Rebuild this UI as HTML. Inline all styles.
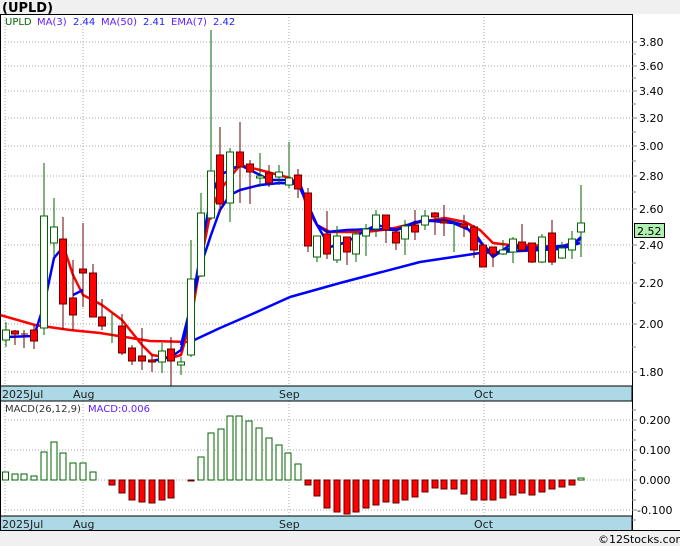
<!DOCTYPE html>
<html><head><meta charset="utf-8"><style>
body{margin:0;background:#f0f0f0;width:680px;height:546px;overflow:hidden;font-family:"Liberation Sans",sans-serif}
svg{display:block}
text{font-family:"DejaVu Sans","Liberation Sans",sans-serif}
</style></head><body>
<svg width="680" height="546" xmlns="http://www.w3.org/2000/svg">
<rect x="0" y="0" width="680" height="546" fill="#f0f0f0"/>
<text x="2" y="12" font-size="13" font-weight="bold" font-family="Liberation Sans,sans-serif" fill="#000">(UPLD)</text>
<rect x="0" y="14" width="680" height="516" fill="#fff"/>
<!-- main grid -->
<g stroke="#aaa" stroke-dasharray="1,2" stroke-width="1">
<line x1="5" y1="42" x2="632" y2="42"/><line x1="5" y1="66" x2="632" y2="66"/><line x1="5" y1="91" x2="632" y2="91"/><line x1="5" y1="118" x2="632" y2="118"/><line x1="5" y1="146" x2="632" y2="146"/><line x1="5" y1="176" x2="632" y2="176"/><line x1="5" y1="209" x2="632" y2="209"/><line x1="5" y1="245" x2="632" y2="245"/><line x1="5" y1="283" x2="632" y2="283"/><line x1="5" y1="324" x2="632" y2="324"/><line x1="5" y1="372" x2="632" y2="372"/>
<line x1="5" y1="14" x2="5" y2="386"/><line x1="83" y1="14" x2="83" y2="386"/><line x1="289" y1="14" x2="289" y2="386"/><line x1="484" y1="14" x2="484" y2="386"/>
<line x1="5" y1="420" x2="632" y2="420"/><line x1="5" y1="450" x2="632" y2="450"/><line x1="5" y1="480" x2="632" y2="480"/><line x1="5" y1="510" x2="632" y2="510"/>
<line x1="5" y1="401" x2="5" y2="516"/><line x1="83" y1="401" x2="83" y2="516"/><line x1="289" y1="401" x2="289" y2="516"/><line x1="484" y1="401" x2="484" y2="516"/>
</g>
<text x="5" y="25" font-size="10" fill="#006400">UPLD</text>
<text x="37" y="25" font-size="10" fill="#6020ff">MA(3)</text><text x="73" y="25" font-size="10" fill="#2020ff">2.44</text>
<text x="101" y="25" font-size="10" fill="#6020ff">MA(50)</text><text x="143" y="25" font-size="10" fill="#2020ff">2.41</text>
<text x="171" y="25" font-size="10" fill="#6020ff">EMA(7)</text><text x="213" y="25" font-size="10" fill="#2020ff">2.42</text>
<!-- lines -->
<g fill="none" stroke-width="2.5" stroke-linejoin="round">
<polyline stroke="#f00" points="0,315 35,325 70,330 100,333 150,341 190,342"/>
<polyline stroke="#00f" points="190,342 220,328 250,315 290,297 340,283 420,262 480,253 560,249 580,243"/>
<polyline stroke="#f00" points="63,245 73,275 83,295 102,305 122,320 142,345 152,355 171,358 181,355 191,320 201,260 211,210 220,190 240,165 260,170 290,178 300,185 308,210 317,225 330,232 350,232 366,232 390,229 420,222 445,218 465,222 480,230 493,243 510,245 530,245 560,247 580,240"/>
<polyline stroke="#00f" points="6,337 34,336 44,305 54,258 63,247"/>
<polyline stroke="#00f" points="73,295 83,290"/>
<polyline stroke="#00f" points="152,361 171,357 181,350 191,310 201,250 211,196 220,175 240,165 250,170 270,180 290,180 300,184 308,205 317,225 330,247 347,242 366,230 377,225 397,230 423,220 453,223 474,232 483,245 493,257 510,245 533,248 560,246 572,245 581,237"/>
<polyline stroke="#00f" points="181,345 191,305 201,265 211,235 220,210 230,195 240,190 260,185 280,183 298,184 308,205 317,225 327,232 347,230 376,229 396,230 415,222 444,220 464,225 483,245 493,254 513,248 552,249 572,246 581,238"/>
</g>
<!-- candles -->
<g stroke-width="1">
<g stroke="#006400" fill="#fff">
<line x1="6" y1="322" x2="6" y2="347"/><rect x="2.5" y="330" width="7" height="10"/>
<line x1="44" y1="163" x2="44" y2="335"/><rect x="40.5" y="216" width="7" height="112"/>
<line x1="54" y1="198" x2="54" y2="257"/><rect x="50.5" y="227" width="7" height="16"/>
<line x1="112" y1="313" x2="112" y2="343"/>
<line x1="162" y1="343" x2="162" y2="373"/><rect x="158.5" y="351" width="7" height="11"/>
<line x1="181" y1="357" x2="181" y2="375"/><rect x="177.5" y="362" width="7" height="3"/>
<line x1="191" y1="240" x2="191" y2="357"/><rect x="187.5" y="279" width="7" height="76"/>
<line x1="201" y1="193" x2="201" y2="277"/><rect x="197.5" y="213" width="7" height="63"/>
<line x1="211" y1="30" x2="211" y2="220"/><rect x="207.5" y="171" width="7" height="47"/>
<line x1="230" y1="148" x2="230" y2="222"/><rect x="226.5" y="152" width="7" height="51"/>
<line x1="260" y1="153" x2="260" y2="187"/><rect x="256.5" y="176" width="7" height="2"/>
<line x1="279" y1="165" x2="279" y2="185"/><rect x="275.5" y="172" width="7" height="5"/>
<line x1="289" y1="142" x2="289" y2="188"/><rect x="285.5" y="178" width="7" height="7"/>
<line x1="317" y1="236" x2="317" y2="262"/><rect x="313.5" y="236" width="7" height="21"/>
<line x1="337" y1="226" x2="337" y2="263"/><rect x="333.5" y="236" width="7" height="24"/>
<line x1="356" y1="229" x2="356" y2="262"/><rect x="352.5" y="234" width="7" height="20"/>
<line x1="366" y1="224" x2="366" y2="256"/><rect x="362.5" y="229" width="7" height="7"/>
<line x1="376" y1="210" x2="376" y2="237"/><rect x="372.5" y="215" width="7" height="14"/>
<line x1="405" y1="220" x2="405" y2="255"/><rect x="401.5" y="226" width="7" height="13"/>
<line x1="425" y1="210" x2="425" y2="230"/><rect x="421.5" y="216" width="7" height="9"/>
<line x1="454" y1="220" x2="454" y2="252"/>
<line x1="503" y1="240" x2="503" y2="255"/><rect x="499.5" y="250" width="7" height="4"/>
<line x1="513" y1="237" x2="513" y2="263"/><rect x="509.5" y="239" width="7" height="13"/>
<line x1="542" y1="234" x2="542" y2="263"/><rect x="538.5" y="237" width="7" height="25"/>
<line x1="562" y1="242" x2="562" y2="259"/><rect x="558.5" y="248" width="7" height="10"/>
<line x1="572" y1="231" x2="572" y2="259"/><rect x="568.5" y="239" width="7" height="11"/>
<line x1="581" y1="185" x2="581" y2="257"/><rect x="577.5" y="223" width="7" height="9"/>
</g>
<g stroke="#600" fill="#f00">
<line x1="15" y1="330" x2="15" y2="345"/><rect x="11.5" y="331" width="7" height="3"/>
<line x1="24" y1="330" x2="24" y2="348"/><line x1="21" y1="334" x2="28" y2="334"/>
<line x1="34" y1="325" x2="34" y2="349"/><rect x="30.5" y="330" width="7" height="11"/>
<line x1="63" y1="217" x2="63" y2="330"/><rect x="59.5" y="239" width="7" height="65"/>
<line x1="73" y1="260" x2="73" y2="330"/><rect x="69.5" y="298" width="7" height="17"/>
<line x1="83" y1="223" x2="83" y2="307"/><rect x="79.5" y="269" width="7" height="4"/>
<line x1="93" y1="264" x2="93" y2="317"/><rect x="89.5" y="273" width="7" height="44"/>
<line x1="102" y1="299" x2="102" y2="330"/><rect x="98.5" y="317" width="7" height="9"/>
<line x1="122" y1="314" x2="122" y2="355"/><rect x="118.5" y="326" width="7" height="27"/>
<line x1="132" y1="345" x2="132" y2="365"/><rect x="128.5" y="348" width="7" height="13"/>
<line x1="142" y1="328" x2="142" y2="370"/><rect x="138.5" y="356" width="7" height="5"/>
<line x1="152" y1="355" x2="152" y2="372"/><rect x="148.5" y="360" width="7" height="2"/>
<line x1="171" y1="337" x2="171" y2="386"/><rect x="167.5" y="349" width="7" height="12"/>
<line x1="220" y1="127" x2="220" y2="213"/><rect x="216.5" y="155" width="7" height="49"/>
<line x1="240" y1="122" x2="240" y2="203"/><rect x="236.5" y="152" width="7" height="15"/>
<line x1="250" y1="160" x2="250" y2="204"/><rect x="246.5" y="164" width="7" height="8"/>
<line x1="269" y1="165" x2="269" y2="187"/><rect x="265.5" y="173" width="7" height="10"/>
<line x1="298" y1="169" x2="298" y2="198"/><rect x="294.5" y="175" width="7" height="14"/>
<line x1="308" y1="188" x2="308" y2="252"/><rect x="304.5" y="193" width="7" height="53"/>
<line x1="327" y1="211" x2="327" y2="259"/><rect x="323.5" y="234" width="7" height="20"/>
<line x1="347" y1="237" x2="347" y2="265"/><rect x="343.5" y="237" width="7" height="15"/>
<line x1="386" y1="215" x2="386" y2="243"/><rect x="382.5" y="215" width="7" height="15"/>
<line x1="396" y1="228" x2="396" y2="250"/><rect x="392.5" y="232" width="7" height="11"/>
<line x1="415" y1="210" x2="415" y2="240"/><rect x="411.5" y="225" width="7" height="7"/>
<line x1="435" y1="212" x2="435" y2="235"/><rect x="431.5" y="213" width="7" height="4"/>
<line x1="444" y1="205" x2="444" y2="236"/><rect x="440.5" y="221" width="7" height="2"/>
<line x1="464" y1="215" x2="464" y2="237"/><rect x="460.5" y="224" width="7" height="3"/>
<line x1="474" y1="225" x2="474" y2="258"/><rect x="470.5" y="227" width="7" height="23"/>
<line x1="483" y1="243" x2="483" y2="267"/><rect x="479.5" y="245" width="7" height="22"/>
<line x1="493" y1="247" x2="493" y2="267"/><rect x="489.5" y="247" width="7" height="7"/>
<line x1="522" y1="224" x2="522" y2="252"/><rect x="518.5" y="242" width="7" height="8"/>
<line x1="532" y1="243" x2="532" y2="263"/><rect x="528.5" y="243" width="7" height="19"/>
<line x1="552" y1="220" x2="552" y2="265"/><rect x="548.5" y="233" width="7" height="29"/>
</g>
</g>
<!-- MACD bars -->
<g stroke="#006400" fill="#fff">
<rect x="2.5" y="472" width="6" height="8"/><rect x="12" y="474" width="6" height="6"/><rect x="21" y="474" width="6" height="6"/><rect x="31" y="476" width="6" height="4"/>
<rect x="41" y="452" width="6" height="28"/><rect x="51" y="442" width="6" height="38"/><rect x="60" y="453" width="6" height="27"/><rect x="70" y="463" width="6" height="17"/><rect x="80" y="463" width="6" height="17"/><rect x="90" y="472" width="6" height="8"/>
<rect x="198" y="457" width="6" height="23"/><rect x="208" y="433" width="6" height="47"/><rect x="218" y="429" width="6" height="51"/><rect x="227" y="416" width="6" height="64"/><rect x="236" y="416" width="6" height="64"/><rect x="246" y="421" width="6" height="59"/><rect x="256" y="428" width="6" height="52"/><rect x="266" y="438" width="6" height="42"/><rect x="276" y="445" width="6" height="35"/><rect x="285" y="453" width="6" height="27"/><rect x="295" y="464" width="6" height="16"/>
<rect x="578" y="478" width="6" height="2"/>
</g>
<g stroke="#600" fill="#f00">
<rect x="109" y="480" width="6" height="5"/><rect x="119" y="480" width="6" height="13"/><rect x="129" y="480" width="6" height="20"/><rect x="139" y="480" width="6" height="22"/><rect x="149" y="480" width="6" height="23"/><rect x="159" y="480" width="6" height="20"/><rect x="168" y="480" width="6" height="18"/><rect x="188" y="480" width="6" height="1"/>
<rect x="305" y="480" width="6" height="5"/><rect x="314" y="480" width="6" height="16"/><rect x="324" y="480" width="6" height="28"/><rect x="334" y="480" width="6" height="32"/><rect x="344" y="480" width="6" height="34"/><rect x="353" y="480" width="6" height="32"/><rect x="363" y="480" width="6" height="28"/><rect x="373" y="480" width="6" height="25"/><rect x="383" y="480" width="6" height="22"/><rect x="393" y="480" width="6" height="23"/><rect x="402" y="480" width="6" height="20"/><rect x="412" y="480" width="6" height="17"/><rect x="422" y="480" width="6" height="12"/><rect x="432" y="480" width="6" height="8"/><rect x="441" y="480" width="6" height="9"/><rect x="451" y="480" width="6" height="9"/><rect x="461" y="480" width="6" height="14"/><rect x="471" y="480" width="6" height="20"/><rect x="481" y="480" width="6" height="20"/><rect x="490" y="480" width="6" height="20"/><rect x="500" y="480" width="6" height="18"/><rect x="510" y="480" width="6" height="15"/><rect x="519" y="480" width="6" height="13"/><rect x="529" y="480" width="6" height="15"/><rect x="539" y="480" width="6" height="12"/><rect x="549" y="480" width="6" height="9"/><rect x="559" y="480" width="6" height="7"/><rect x="569" y="480" width="6" height="5"/>
</g>
<text x="5" y="412" font-size="10" fill="#333">MACD(26,12,9)</text>
<text x="88" y="412" font-size="10" fill="#6020ff">MACD:0.006</text>
<!-- date strips -->
<rect x="0" y="386" width="632" height="15" fill="#add8e6" stroke="#000"/>
<rect x="0" y="516" width="632" height="15" fill="#add8e6" stroke="#000"/>
<g font-size="11" fill="#222">
<text x="2" y="398">2025Jul</text><text x="73" y="398">Aug</text><text x="279" y="398">Sep</text><text x="474" y="398">Oct</text>
<text x="2" y="528">2025Jul</text><text x="73" y="528">Aug</text><text x="279" y="528">Sep</text><text x="474" y="528">Oct</text>
</g>
<!-- frame -->
<line x1="0.5" y1="14" x2="0.5" y2="531" stroke="#000"/>
<line x1="0" y1="14.5" x2="632" y2="14.5" stroke="#000"/>
<line x1="632.5" y1="14" x2="632.5" y2="531" stroke="#000"/>
<line x1="0" y1="530.5" x2="680" y2="530.5" stroke="#000"/>
<!-- right axis ticks/labels -->
<g stroke="#888">
<line x1="632" y1="42" x2="637" y2="42"/><line x1="632" y1="54" x2="636" y2="54"/><line x1="632" y1="66" x2="637" y2="66"/><line x1="632" y1="78" x2="636" y2="78"/><line x1="632" y1="91" x2="637" y2="91"/><line x1="632" y1="104" x2="636" y2="104"/><line x1="632" y1="118" x2="637" y2="118"/><line x1="632" y1="132" x2="636" y2="132"/><line x1="632" y1="146" x2="637" y2="146"/><line x1="632" y1="161" x2="636" y2="161"/><line x1="632" y1="176" x2="637" y2="176"/><line x1="632" y1="192" x2="636" y2="192"/><line x1="632" y1="209" x2="637" y2="209"/><line x1="632" y1="245" x2="637" y2="245"/><line x1="632" y1="263" x2="636" y2="263"/><line x1="632" y1="283" x2="637" y2="283"/><line x1="632" y1="303" x2="636" y2="303"/><line x1="632" y1="324" x2="637" y2="324"/><line x1="632" y1="347" x2="636" y2="347"/><line x1="632" y1="372" x2="637" y2="372"/>
<line x1="632" y1="410" x2="636" y2="410"/><line x1="632" y1="420" x2="637" y2="420"/><line x1="632" y1="430" x2="636" y2="430"/><line x1="632" y1="440" x2="636" y2="440"/><line x1="632" y1="450" x2="637" y2="450"/><line x1="632" y1="460" x2="636" y2="460"/><line x1="632" y1="470" x2="636" y2="470"/><line x1="632" y1="480" x2="637" y2="480"/><line x1="632" y1="490" x2="636" y2="490"/><line x1="632" y1="500" x2="636" y2="500"/><line x1="632" y1="510" x2="637" y2="510"/><line x1="632" y1="520" x2="636" y2="520"/>
</g>
<g font-size="11" fill="#000">
<text x="639" y="46">3.80</text><text x="639" y="70">3.60</text><text x="639" y="95">3.40</text><text x="639" y="122">3.20</text><text x="639" y="150">3.00</text><text x="639" y="180">2.80</text><text x="639" y="213">2.60</text><text x="639" y="249">2.40</text><text x="639" y="287">2.20</text><text x="639" y="328">2.00</text><text x="639" y="376">1.80</text>
<text x="639" y="424">0.200</text><text x="639" y="454">0.100</text><text x="639" y="484">0.000</text><text x="637" y="514">-0.100</text>
</g>
<rect x="634.5" y="223.5" width="30" height="14" fill="#b0f0b0" stroke="#000"/>
<text x="637" y="235" font-size="11" fill="#000">2.52</text>
<rect x="0" y="531" width="680" height="15" fill="#f0f0f0"/>
<text x="598" y="543" font-size="11" fill="#000">©12Stocks.com</text>
</svg>
</body></html>
